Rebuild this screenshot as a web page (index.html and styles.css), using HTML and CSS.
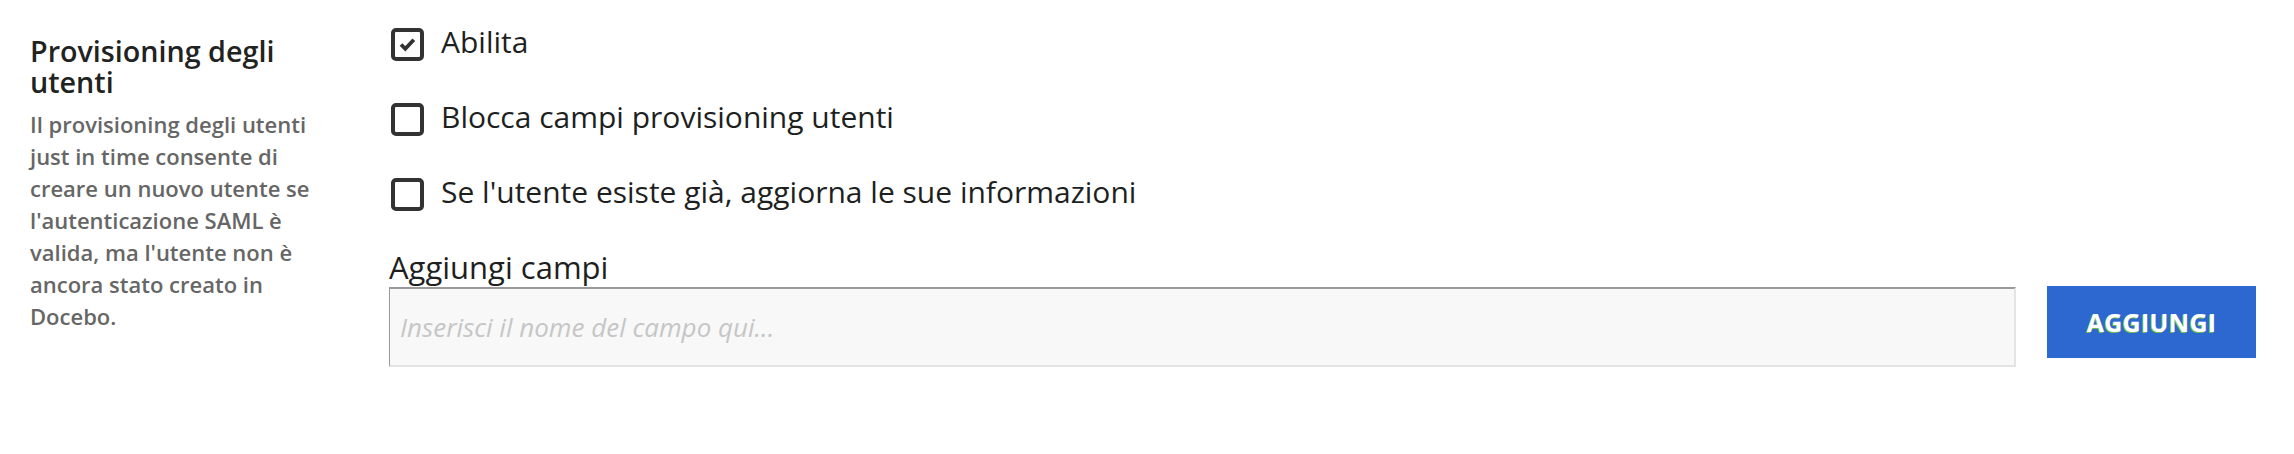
FILE: index.html
```html
<!DOCTYPE html>
<html lang="it">
<head>
<meta charset="utf-8">
<title>Provisioning degli utenti</title>
<link rel="stylesheet" href="styles.css">
</head>
<body>
<div class="section">
  <div class="info">
    <h2 class="info-title">Provisioning degli utenti</h2>
    <p class="info-desc">Il provisioning degli utenti just in time consente di creare un nuovo utente se l'autenticazione SAML è valida, ma l'utente non è ancora stato creato in Docebo.</p>
  </div>
  <div class="settings">
    <label class="check-row">
      <span class="checkbox checked">
        <svg viewBox="0 0 25 25" width="25" height="25"><polyline points="6,12.5 10.3,16.8 18.8,7.8" fill="none" stroke="#333" stroke-width="3.8" stroke-linecap="butt" stroke-linejoin="miter"/></svg>
      </span>
      <span class="check-label">Abilita</span>
    </label>
    <label class="check-row">
      <span class="checkbox"></span>
      <span class="check-label">Blocca campi provisioning utenti</span>
    </label>
    <label class="check-row">
      <span class="checkbox"></span>
      <span class="check-label">Se l'utente esiste già, aggiorna le sue informazioni</span>
    </label>
    <div class="add-fields">
      <div class="field-label">Aggiungi campi</div>
      <div class="field-row">
        <input class="field-input" type="text" placeholder="Inserisci il nome del campo qui...">
        <button class="btn-add" type="button">AGGIUNGI</button>
      </div>
    </div>
  </div>
</div>
</body>
</html>
```
FILE: styles.css
```css
* { box-sizing: border-box; }
html, body { margin: 0; padding: 0; background: #fff; }
body { font-family: "Open Sans", "Liberation Sans", sans-serif; color: #222; }

.section {
  display: flex;
  align-items: flex-start;
  padding: 28px 38px 0 30px;
}

.info {
  width: 286px;
  flex: none;
  margin-right: 73px;
  padding-top: 7px;
}
.info-title {
  margin: 0;
  font-size: 28.7px;
  font-weight: 600;
  line-height: 31px;
  color: #1f2321;
}
.info-desc {
  margin: 11px 0 0;
  font-size: 22px;
  font-weight: 600;
  line-height: 32px;
  color: #666;
}

.settings {
  flex: 1;
  display: flex;
  flex-direction: column;
}

.check-row {
  display: flex;
  align-items: flex-start;
  height: 33px;
  margin-bottom: 42px;
  padding-left: 2px;
}
.checkbox {
  width: 33px;
  height: 33px;
  flex: none;
  border: 4px solid #333;
  border-radius: 5px;
  display: flex;
  align-items: center;
  justify-content: center;
}
.check-label {
  margin-left: 17px;
  margin-top: -3px;
  font-size: 30px;
  line-height: 33px;
  color: #1e1f1f;
}

.add-fields {
  margin-top: -5px;
}
.field-label {
  font-size: 31px;
  line-height: 38px;
  color: #1e1f1f;
  margin-bottom: 1px;
}
.field-row {
  display: flex;
  align-items: flex-start;
  gap: 31px;
}
.field-input {
  flex: 1;
  height: 80px;
  margin: 0;
  padding: 0 10px;
  background: #f8f8f8;
  border-style: solid;
  border-width: 2px 2px 2px 1px;
  border-color: #999 #e4e4e4 #e4e4e4 #999;
  font-family: "Open Sans", "Liberation Sans", sans-serif;
  font-size: 26px;
  color: #333;
  outline: none;
}
.field-input::placeholder {
  color: #c6c6c6;
  font-style: italic;
}
.btn-add {
  width: 209px;
  height: 72px;
  margin-top: -1px;
  border: 0;
  background: #2d68d1;
  color: #fff;
  font-family: "Open Sans", "Liberation Sans", sans-serif;
  font-weight: 700;
  font-size: 25px;
  letter-spacing: 0.3px;
  text-shadow: -1px 1px 0 #72bf50;
  cursor: pointer;
}
```
